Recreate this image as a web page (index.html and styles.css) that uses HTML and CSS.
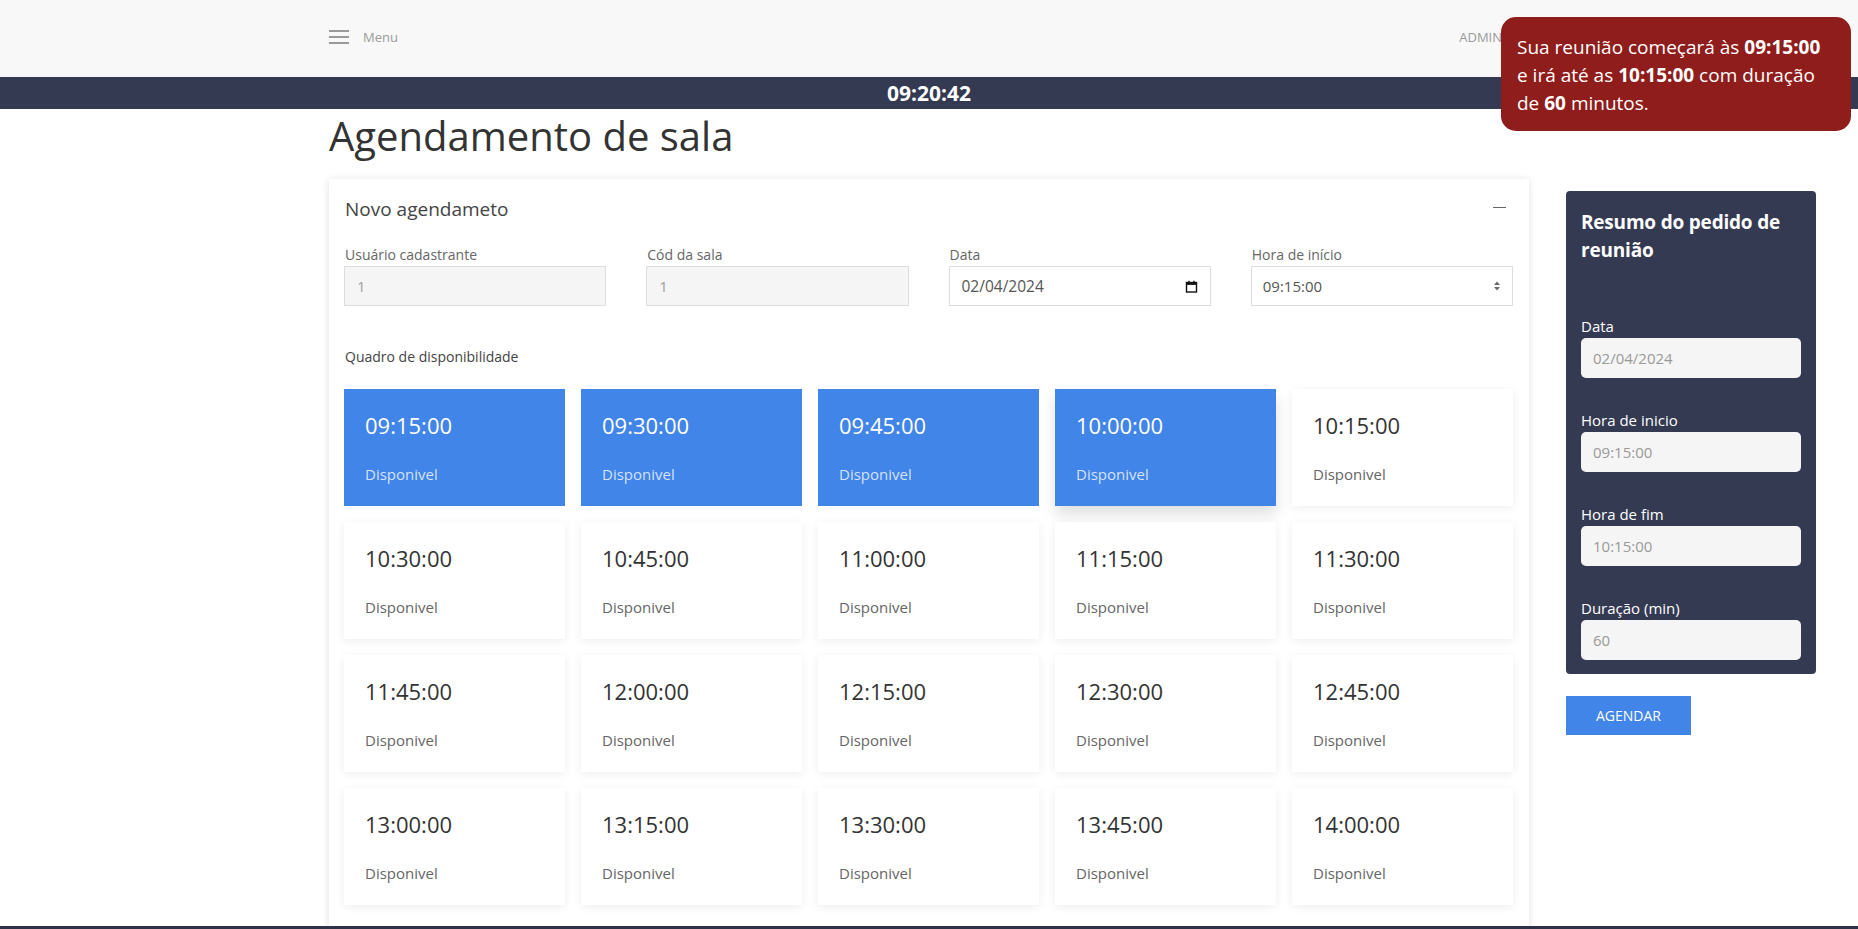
FILE: index.html
```html
<!DOCTYPE html>
<html lang="pt-BR">
<head>
<meta charset="utf-8">
<title>Agendamento de sala</title>
<link rel="stylesheet" href="styles.css">
</head>
<body>
<header class="topbar">
  <div class="topbar-inner">
    <div class="menu">
      <svg class="burger" width="20" height="14" viewBox="0 0 20 14"><path d="M0 1h20M0 7h20M0 13h20" stroke="#9a9a9a" stroke-width="2"/></svg>
      <span class="menu-label">Menu</span>
    </div>
    <div class="user">ADMIN</div>
  </div>
</header>
<div class="clockbar">09:20:42</div>

<div class="toast">Sua reunião começará às <b>09:15:00</b><br>e irá até as <b>10:15:00</b> com duração<br>de <b>60</b> minutos.</div>

<main class="layout">
  <div class="gutter"></div>
  <section class="main-col">
    <h1 class="page-title">Agendamento de sala</h1>
    <div class="card">
      <div class="card-head">
        <span class="card-title">Novo agendameto</span>
        <span class="collapse"></span>
      </div>
      <div class="fields">
        <div class="field">
          <div class="label">Usuário cadastrante</div>
          <div class="input disabled">1</div>
        </div>
        <div class="field">
          <div class="label">Cód da sala</div>
          <div class="input disabled">1</div>
        </div>
        <div class="field">
          <div class="label">Data</div>
          <div class="input date"><span>02/04/2024</span>
            <svg width="13" height="13" viewBox="0 0 13 13"><rect x="1.5" y="2.5" width="10" height="9.5" fill="none" stroke="#111" stroke-width="1.4"/><rect x="1.5" y="2.5" width="10" height="2.4" fill="#111"/><rect x="3.3" y="0.8" width="1.4" height="2" fill="#111"/><rect x="8.3" y="0.8" width="1.4" height="2" fill="#111"/></svg>
          </div>
        </div>
        <div class="field">
          <div class="label">Hora de início</div>
          <div class="input select"><span>09:15:00</span>
            <svg width="8" height="12" viewBox="0 0 8 12"><path d="M4 1.5L7 5H1z M4 10.5L1 7h6z" fill="#6b6b6b"/></svg>
          </div>
        </div>
      </div>
      <div class="quadro">Quadro de disponibilidade</div>
      <div class="slots">
        <div class="slot selected"><div class="time">09:15:00</div><div class="status">Disponivel</div></div>
        <div class="slot selected"><div class="time">09:30:00</div><div class="status">Disponivel</div></div>
        <div class="slot selected"><div class="time">09:45:00</div><div class="status">Disponivel</div></div>
        <div class="slot selected hover"><div class="time">10:00:00</div><div class="status">Disponivel</div></div>
        <div class="slot"><div class="time">10:15:00</div><div class="status">Disponivel</div></div>
        <div class="slot"><div class="time">10:30:00</div><div class="status">Disponivel</div></div>
        <div class="slot"><div class="time">10:45:00</div><div class="status">Disponivel</div></div>
        <div class="slot"><div class="time">11:00:00</div><div class="status">Disponivel</div></div>
        <div class="slot"><div class="time">11:15:00</div><div class="status">Disponivel</div></div>
        <div class="slot"><div class="time">11:30:00</div><div class="status">Disponivel</div></div>
        <div class="slot"><div class="time">11:45:00</div><div class="status">Disponivel</div></div>
        <div class="slot"><div class="time">12:00:00</div><div class="status">Disponivel</div></div>
        <div class="slot"><div class="time">12:15:00</div><div class="status">Disponivel</div></div>
        <div class="slot"><div class="time">12:30:00</div><div class="status">Disponivel</div></div>
        <div class="slot"><div class="time">12:45:00</div><div class="status">Disponivel</div></div>
        <div class="slot"><div class="time">13:00:00</div><div class="status">Disponivel</div></div>
        <div class="slot"><div class="time">13:15:00</div><div class="status">Disponivel</div></div>
        <div class="slot"><div class="time">13:30:00</div><div class="status">Disponivel</div></div>
        <div class="slot"><div class="time">13:45:00</div><div class="status">Disponivel</div></div>
        <div class="slot"><div class="time">14:00:00</div><div class="status">Disponivel</div></div>
      </div>
    </div>
  </section>
  <aside class="side-col">
    <div class="summary">
      <h2 class="summary-title">Resumo do pedido de reunião</h2>
      <div class="s-field">
        <div class="s-label">Data</div>
        <div class="s-input">02/04/2024</div>
      </div>
      <div class="s-field">
        <div class="s-label">Hora de inicio</div>
        <div class="s-input">09:15:00</div>
      </div>
      <div class="s-field">
        <div class="s-label">Hora de fim</div>
        <div class="s-input">10:15:00</div>
      </div>
      <div class="s-field">
        <div class="s-label">Duração (min)</div>
        <div class="s-input">60</div>
      </div>
    </div>
    <button class="btn">AGENDAR</button>
  </aside>
</main>
<div class="footer-edge"></div>
</body>
</html>
```

FILE: styles.css
```css
html {
  scrollbar-width: none;
}
html::-webkit-scrollbar {
  display: none;
}
body {
  margin: 0;
  background: #fff;
  font-family: "Open Sans", "Noto Sans", sans-serif;
  color: #333;
}

.topbar {
  background: #f8f8f8;
  height: 77px;
}
.topbar-inner {
  width: 1200px;
  margin: 0 auto;
  height: 100%;
  box-sizing: border-box;
  padding-bottom: 3px;
  display: flex;
  align-items: center;
  justify-content: space-between;
}
.menu {
  display: flex;
  align-items: center;
}
.burger {
  display: block;
}
.menu-label {
  margin-left: 14px;
  font-size: 13px;
  color: #9a9a9a;
}
.user {
  font-size: 13px;
  color: #9a9a9a;
  padding-right: 27px;
}

.clockbar {
  background: #343a52;
  height: 32px;
  line-height: 32px;
  text-align: center;
  color: #fff;
  font-weight: 700;
  font-size: 21px;
}

.toast {
  position: fixed;
  top: 17px;
  right: 7px;
  width: 350px;
  box-sizing: border-box;
  padding: 16px 14px 14px 16px;
  background: #8f1d1b;
  color: #fff;
  border-radius: 15px;
  font-size: 19px;
  line-height: 28px;
  white-space: nowrap;
  z-index: 10;
}
.toast b {
  font-weight: 700;
}

.footer-edge {
  position: fixed;
  left: 0;
  right: 0;
  bottom: 0;
  height: 3px;
  background: #2d3245;
}

.layout {
  display: grid;
  grid-template-columns: 1fr 1200px 1fr;
}

.page-title {
  margin: 3px 0 19px;
  font-size: 40px;
  line-height: 48px;
  font-weight: 400;
  color: #333;
}

.card {
  background: #fff;
  box-shadow: 0 1px 8px rgba(0, 0, 0, 0.12);
  padding: 17px 16px 24px 15px;
}
.card-head {
  display: flex;
  align-items: center;
  justify-content: space-between;
  height: 26px;
}
.card-title {
  font-size: 19px;
  color: #444;
  padding-left: 1px;
}
.collapse {
  width: 13px;
  height: 1px;
  background: #666;
  margin-right: 7px;
  margin-top: -4px;
}

.fields {
  display: grid;
  grid-template-columns: repeat(4, 1fr);
  column-gap: 40px;
  margin-top: 23px;
}
.label {
  font-size: 14px;
  line-height: 20px;
  color: #666;
  margin-bottom: 1px;
  padding-left: 1px;
}
.input {
  height: 40px;
  box-sizing: border-box;
  border: 1px solid #ddd;
  background: #fff;
  padding: 0 12px;
  display: flex;
  align-items: center;
  justify-content: space-between;
  font-size: 15px;
  color: #555;
}
.input.disabled {
  background: #f5f5f5;
  color: #a0a0a0;
}
.input.date span {
  font-size: 15.5px;
}
.input.select {
  padding: 0 11px 0 11px;
}

.quadro {
  margin-top: 41px;
  font-size: 14px;
  line-height: 20px;
  color: #444;
  padding-left: 1px;
}

.slots {
  margin-top: 22px;
  display: grid;
  grid-template-columns: repeat(5, 1fr);
  gap: 16px;
}
.slot {
  height: 117px;
  box-sizing: border-box;
  padding: 21px 20px 0 21px;
  background: #fff;
  box-shadow: 0 2px 9px rgba(0, 0, 0, 0.07);
}
.slot .time {
  font-size: 22px;
  line-height: 30px;
  color: #333;
}
.slot .status {
  margin-top: 24px;
  font-size: 15px;
  line-height: 20px;
  color: #666;
}
.slot.selected {
  background: #4285e9;
  box-shadow: none;
}
.slot.selected .time {
  color: #fff;
}
.slot.selected .status {
  color: rgba(255, 255, 255, 0.78);
}
.slot.hover {
  box-shadow: 0 8px 14px rgba(0, 0, 0, 0.13);
}

.side-col {
  padding-left: 37px;
  padding-top: 82px;
}
.summary {
  width: 250px;
  box-sizing: border-box;
  background: #343a52;
  border-radius: 4px;
  padding: 17px 15px 14px;
  color: #fff;
}
.summary-title {
  margin: 0 0 52px;
  font-size: 19px;
  line-height: 28px;
  font-weight: 700;
  letter-spacing: -0.2px;
}
.s-field + .s-field {
  margin-top: 32px;
}
.s-label {
  font-size: 15px;
  line-height: 20px;
  margin-bottom: 2px;
}
.s-input {
  height: 40px;
  box-sizing: border-box;
  background: #f5f5f5;
  border-radius: 5px;
  padding: 0 12px;
  display: flex;
  align-items: center;
  font-size: 15px;
  color: #999;
}

.btn {
  margin-top: 22px;
  width: 125px;
  height: 39px;
  border: 0;
  background: #4285e9;
  color: #fff;
  font-family: "Open Sans", "Noto Sans", sans-serif;
  font-size: 14px;
  padding: 0;
}
```
